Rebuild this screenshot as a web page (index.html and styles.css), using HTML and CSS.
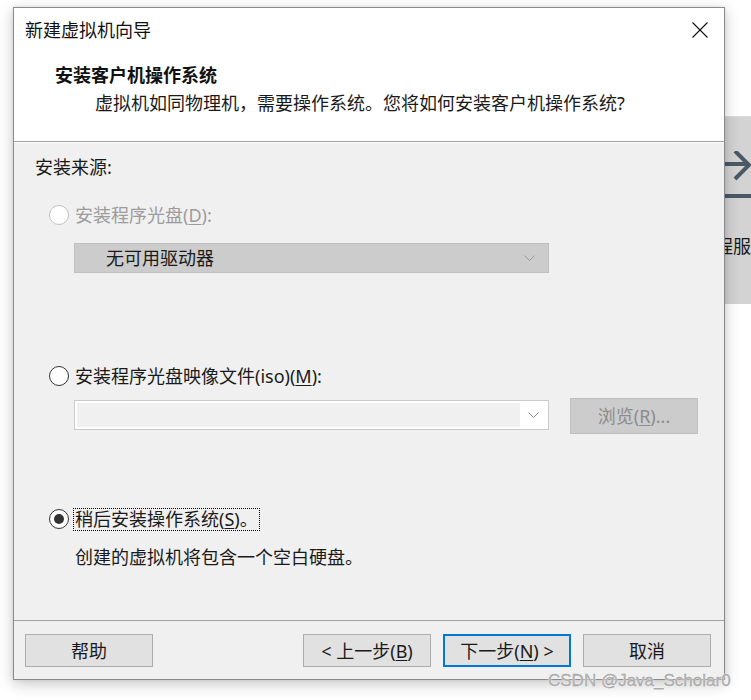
FILE: index.html
```html
<!DOCTYPE html>
<html lang="zh-CN">
<head>
<meta charset="utf-8">
<title>新建虚拟机向导</title>
<link rel="stylesheet" href="styles.css">
</head>
<body>
<div class="page">
  <div class="window">
    <div class="titlebar">
      <span class="title">新建虚拟机向导</span>
      <svg class="close" width="16" height="16" viewBox="0 0 16 16"><path d="M0.5 0.5 L15.5 15.5 M15.5 0.5 L0.5 15.5" stroke="#111" stroke-width="1.1" fill="none"/></svg>
    </div>
    <div class="header">
      <div class="h-title">安装客户机操作系统</div>
      <div class="h-sub">虚拟机如同物理机，需要操作系统。您将如何安装客户机操作系统?</div>
    </div>
    <div class="body">
      <div class="section-label">安装来源:</div>
      <div class="radio-row row1 disabled"><span class="radio"></span><span class="rlabel">安装程序光盘(<u>D</u>):</span></div>
      <div class="select">
        <span class="select-text">无可用驱动器</span>
        <svg class="chev" width="11" height="6" viewBox="0 0 11 6"><path d="M0.5 0.5 L5.5 5.5 L10.5 0.5" stroke="#9a9a9a" stroke-width="1" fill="none"/></svg>
      </div>
      <div class="radio-row row2"><span class="radio"></span><span class="rlabel">安装程序光盘映像文件(iso)(<u>M</u>):</span></div>
      <div class="iso-row">
        <div class="combo">
          <div class="combo-edit"></div>
          <div class="combo-btn"><svg class="chev" width="11" height="6" viewBox="0 0 11 6"><path d="M0.5 0.5 L5.5 5.5 L10.5 0.5" stroke="#8a8a8a" stroke-width="1" fill="none"/></svg></div>
        </div>
        <div class="btn btn-disabled">浏览(<u>R</u>)...</div>
      </div>
      <div class="radio-row row3"><span class="radio checked"></span><span class="rlabel focus">稍后安装操作系统(<u>S</u>)。</span></div>
      <div class="desc">创建的虚拟机将包含一个空白硬盘。</div>
    </div>
    <div class="footer">
      <div class="btn">帮助</div>
      <div class="btn-group">
        <div class="btn">&lt; 上一步(<u>B</u>)</div>
        <div class="btn btn-primary">下一步(<u>N</u>) &gt;</div>
        <div class="btn">取消</div>
      </div>
    </div>
  </div>
  <div class="side">
    <div class="side-panel">
      <svg class="side-arrow" width="26" height="56" viewBox="0 0 26 56"><path d="M0 13 L24 13 M10 0 L24 14 L10 28" stroke="#4b5966" stroke-width="4" fill="none"/><path d="M0 45 L26 45" stroke="#4b5966" stroke-width="4"/></svg>
      <div class="side-text">程服务</div>
    </div>
  </div>
  <div class="watermark">CSDN @Java_Scholar0</div>
</div>
</body>
</html>
```
FILE: styles.css
```css
* { box-sizing: border-box; }
html, body { margin: 0; padding: 0; background: #ffffff; }
body {
  font-family: "Noto Sans", "Noto Sans CJK SC", sans-serif;
  font-size: 18px;
  color: #1a1a1a;
  width: 751px;
  height: 700px;
  overflow: hidden;
}
u { text-decoration: underline; text-underline-offset: 2px; text-decoration-thickness: 1px; }

.page {
  position: relative;
  display: flex;
  align-items: flex-start;
  padding: 7px 0 0 13px;
  height: 700px;
}

.window {
  position: relative;
  z-index: 1;
  width: 712px;
  height: 673px;
  border: 1px solid #8a8a8a;
  background: #f0f0f0;
  display: flex;
  flex-direction: column;
  box-shadow: 0 4px 14px rgba(0,0,0,0.22), 0 0 4px rgba(0,0,0,0.08);
}

.titlebar {
  height: 44px;
  background: #ffffff;
  display: flex;
  align-items: center;
  justify-content: space-between;
  padding: 0 16px 0 11px;
}
.title { line-height: 24px; color: #111; }
.close { display: block; }

.header {
  height: 90px;
  background: #ffffff;
  border-bottom: 1px solid #a0a0a0;
  padding: 10px 0 0 41px;
}
.h-title { font-weight: bold; line-height: 26px; color: #111; }
.h-sub { line-height: 26px; margin: 2px 0 0 40px; color: #1a1a1a; }

.body {
  height: 478px;
  padding: 12px 0 0 0;
  background: #f0f0f0;
  border-top: 1px solid #ffffff;
}
.section-label { line-height: 24px; margin-left: 21px; }

.radio-row {
  display: flex;
  align-items: center;
  height: 24px;
  margin-left: 35px;
}
.row1 { margin-top: 24px; }
.row2 { margin-top: 91px; }
.row3 { margin-top: 73px; }
.radio {
  width: 20px;
  height: 20px;
  border-radius: 50%;
  border: 1px solid #333333;
  background: #ffffff;
  margin-right: 6px;
  display: flex;
  align-items: center;
  justify-content: center;
  flex: none;
}
.disabled .radio { border-color: #c2c2c2; }
.disabled .rlabel { color: #9c9c9c; }
.radio.checked::after {
  content: "";
  width: 10px;
  height: 10px;
  border-radius: 50%;
  background: #333333;
}
.rlabel { line-height: 24px; white-space: nowrap; }
.focus {
  border: 1px dotted #000;
  line-height: 21px;
  padding: 0 1px;
  margin-left: -2px;
}

.select {
  margin: 16px 0 0 60px;
  width: 475px;
  height: 30px;
  background: #cccccc;
  border: 1px solid #c0c0c0;
  display: flex;
  align-items: center;
  justify-content: space-between;
  padding: 0 13px 0 31px;
}
.select-text { line-height: 24px; color: #1a1a1a; }

.iso-row {
  margin: 10px 0 0 60px;
  display: flex;
  align-items: flex-start;
  height: 36px;
}
.combo {
  margin-top: 2px;
  width: 475px;
  height: 30px;
  border: 1px solid #cacaca;
  background: #ffffff;
  padding: 2px;
  display: flex;
}
.combo-edit { flex: 1; background: #f0f0f0; }
.combo-btn {
  width: 26px;
  display: flex;
  align-items: center;
  justify-content: center;
  background: #ffffff;
}

.btn {
  width: 128px;
  height: 33px;
  background: #e1e1e1;
  border: 1px solid #adadad;
  display: flex;
  align-items: center;
  justify-content: center;
  line-height: 24px;
  color: #1a1a1a;
  white-space: nowrap;
}
.btn-disabled {
  margin-left: 21px;
  height: 36px;
  background: #cccccc;
  border-color: #bfbfbf;
  color: #8c8c8c;
}
.btn-primary { border: 2px solid #0078d7; }

.desc { line-height: 24px; margin: 14px 0 0 61px; }

.footer {
  height: 59px;
  border-top: 1px solid #a0a0a0;
  background: #f0f0f0;
  display: flex;
  justify-content: space-between;
  align-items: flex-start;
  padding: 13px 13px 0 11px;
}
.btn-group { display: flex; gap: 12px; }

.side {
  width: 26px;
  margin-top: 109px;
  overflow: hidden;
}
.side-panel {
  height: 188px;
  background: #d3d3d3;
  border-top: 1px solid #dcdcdc;
  padding-top: 34px;
}
.side-arrow { display: block; }
.side-text {
  white-space: nowrap;
  margin: 27px 0 0 -10px;
  line-height: 24px;
  color: #1a1a1a;
}

.watermark {
  position: absolute;
  left: 548px;
  top: 671px;
  font-family: "Liberation Sans", Arial, sans-serif;
  font-size: 17px;
  color: #b4b4b4;
  text-shadow: 0 0 1px #ffffff, 0 0 2px #ffffff;
  -webkit-text-stroke: 0.3px #999;
  white-space: nowrap;
  z-index: 2;
}
```
